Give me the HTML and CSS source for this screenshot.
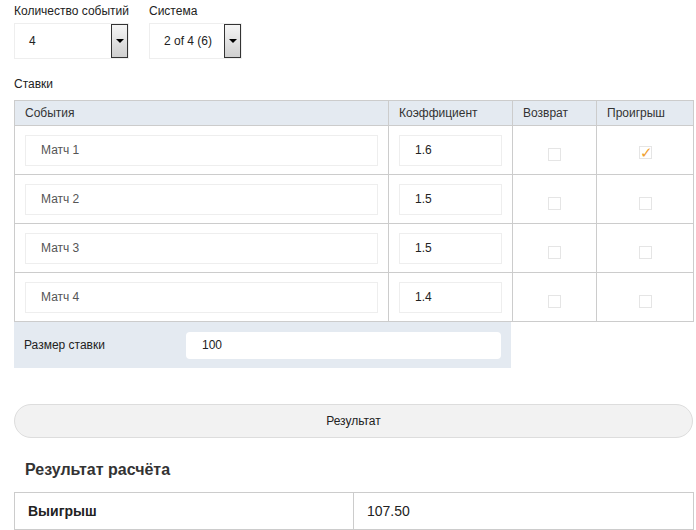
FILE: index.html
```html
<!DOCTYPE html>
<html lang="ru">
<head>
    <meta charset="UTF-8">
    <meta name="viewport" content="width=device-width, initial-scale=1.0">
    <title>Калькулятор систем</title>
    <link rel="stylesheet" href="styles.css">
</head>
<body>

    <div class="calc">
        <div class="selects">
            <div class="field">
                <label>Количество событий</label>
                <div class="select select-count">
                    <span>4</span>
                    <span class="arrow"></span>
                </div>
            </div>
            <div class="field">
                <label>Система</label>
                <div class="select select-system">
                    <span>2 of 4 (6)</span>
                    <span class="arrow"></span>
                </div>
            </div>
        </div>

        <div class="bets-title">Ставки</div>

        <table class="bets">
            <thead>
                <tr>
                    <th class="col-event">События</th>
                    <th class="col-coef">Коэффициент</th>
                    <th class="col-ret">Возврат</th>
                    <th class="col-lose">Проигрыш</th>
                </tr>
            </thead>
            <tbody>
                <tr>
                    <td><div class="input event">Матч 1</div></td>
                    <td><div class="input coef">1.6</div></td>
                    <td class="check-cell"><span class="check"></span></td>
                    <td class="check-cell"><span class="check checked">&#10003;</span></td>
                </tr>
                <tr>
                    <td><div class="input event">Матч 2</div></td>
                    <td><div class="input coef">1.5</div></td>
                    <td class="check-cell"><span class="check"></span></td>
                    <td class="check-cell"><span class="check"></span></td>
                </tr>
                <tr>
                    <td><div class="input event">Матч 3</div></td>
                    <td><div class="input coef">1.5</div></td>
                    <td class="check-cell"><span class="check"></span></td>
                    <td class="check-cell"><span class="check"></span></td>
                </tr>
                <tr>
                    <td><div class="input event">Матч 4</div></td>
                    <td><div class="input coef">1.4</div></td>
                    <td class="check-cell"><span class="check"></span></td>
                    <td class="check-cell"><span class="check"></span></td>
                </tr>
            </tbody>
        </table>

        <div class="stake">
            <span class="stake-label">Размер ставки</span>
            <div class="stake-input">100</div>
        </div>

        <button class="result-btn">Результат</button>

        <h3 class="result-title">Результат расчёта</h3>

        <table class="result">
            <tr>
                <td class="result-name">Выигрыш</td>
                <td class="result-value">107.50</td>
            </tr>
        </table>
    </div>

</body>
</html>
```

FILE: styles.css
```css
* {
    margin: 0;
    padding: 0;
    box-sizing: border-box;
    font-family: 'Liberation Sans', Arial, sans-serif;
}

body {
    background: #fff;
    color: #222;
    font-size: 12px;
}

.calc {
    padding: 3px 3px 0 14px;
}

.selects {
    display: flex;
    gap: 20px;
}

.field label {
    display: block;
    font-size: 12px;
    line-height: 16px;
    margin-bottom: 4px;
}

.select {
    display: flex;
    align-items: center;
    justify-content: space-between;
    height: 36px;
    border: 1px solid #eee;
    background: #fff;
    padding-left: 14px;
    font-size: 12px;
}

.select-count {
    width: 115px;
}

.select-system {
    width: 93px;
}

.arrow {
    position: relative;
    width: 17px;
    height: 34px;
    border: 1px solid #333;
    background: linear-gradient(#f5f5f5, #cfcfcf);
}

.arrow::after {
    content: "";
    position: absolute;
    left: 4px;
    top: 14px;
    border-left: 4px solid transparent;
    border-right: 4px solid transparent;
    border-top: 4px solid #000;
}

.bets-title {
    margin-top: 17px;
    line-height: 16px;
}

.bets {
    margin-top: 8px;
    width: 680px;
    border-collapse: collapse;
}

.bets th {
    background: #e4eaf1;
    font-weight: normal;
    text-align: left;
    height: 25px;
    padding: 0 10px;
    border: 1px solid #ccc;
    color: #333;
}

.col-event {
    width: 374px;
}

.col-coef {
    width: 124px;
}

.col-ret {
    width: 84px;
}

.bets td {
    height: 49px;
    border: 1px solid #ccc;
    padding: 0 10px;
}

.input {
    height: 31px;
    line-height: 29px;
    border: 1px solid #eee;
    padding-left: 15px;
    color: #555;
}

.coef {
    color: #222;
}

.check-cell {
    text-align: center;
}

.check {
    display: inline-block;
    width: 13px;
    height: 13px;
    border: 1px solid #e5e5e5;
    vertical-align: middle;
    margin-top: 9px;
    font-size: 15px;
    line-height: 11px;
    color: #f0a030;
}

.check.checked {
    margin-top: 5px;
}

.stake {
    display: flex;
    align-items: center;
    width: 497px;
    height: 46px;
    background: #e4eaf1;
    padding: 0 10px;
}

.stake-label {
    width: 162px;
}

.stake-input {
    flex: 1;
    height: 27px;
    line-height: 27px;
    background: #fff;
    border-radius: 4px;
    padding-left: 16px;
}

.result-btn {
    display: block;
    width: 679px;
    height: 34px;
    margin-top: 36px;
    border: 1px solid #ddd;
    border-radius: 17px;
    background: #f2f2f2;
    font-size: 12px;
    color: #222;
}

.result-title {
    margin: 21px 0 0 11px;
    font-size: 16px;
    line-height: 22px;
    color: #333;
}

.result {
    margin-top: 11px;
    width: 680px;
    border-collapse: collapse;
}

.result td {
    height: 37px;
    border: 1px solid #ccc;
    padding: 0 13px;
    font-size: 14px;
}

.result-name {
    width: 339px;
    font-weight: bold;
}
```
